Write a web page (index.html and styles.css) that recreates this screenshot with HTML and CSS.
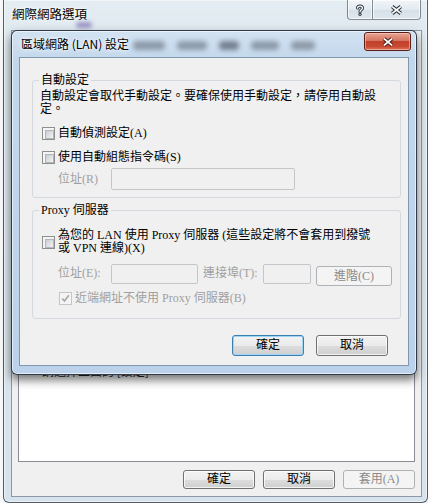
FILE: index.html
```html
<!DOCTYPE html>
<html>
<head>
    <meta charset="utf-8">
    <link rel="stylesheet" href="styles.css">
</head>
<body>
    <div class="window">
        <div class="titlebar">
            <span class="blur-spot"></span>
            <span class="win-title">網際網路選項</span>
            <div class="caption">
                <button class="cap-btn cap-help">
                    <svg width="10" height="12" viewBox="0 0 10 12">
                        <path d="M2.6 4 C2.6 1.4 7.4 1.4 7.4 4 C7.4 5.9 5 5.8 5 7.8" fill="none" stroke="#2f3a44" stroke-width="3.2" stroke-linecap="round"/>
                        <circle cx="5" cy="10.3" r="1.6" fill="#2f3a44"/>
                        <path d="M2.6 4 C2.6 1.4 7.4 1.4 7.4 4 C7.4 5.9 5 5.8 5 7.8" fill="none" stroke="#fff" stroke-width="1.3" stroke-linecap="round"/>
                        <circle cx="5" cy="10.3" r="0.6" fill="#fff"/>
                    </svg>
                </button>
                <button class="cap-btn cap-close">
                    <svg width="13" height="10" viewBox="0 0 13 10">
                        <path d="M2.2 1.6 L10.8 8.4 M10.8 1.6 L2.2 8.4" stroke="#2f3a44" stroke-width="3.8"/>
                        <path d="M2.2 1.6 L10.8 8.4 M10.8 1.6 L2.2 8.4" stroke="#fff" stroke-width="1.8"/>
                    </svg>
                </button>
            </div>
        </div>
        <div class="client">
            <div class="tabpanel">
                <p class="behind-text">請選擇上面的 [設定]</p>
            </div>
            <div class="footer">
                <button class="btn small">確定</button>
                <button class="btn small">取消</button>
                <button class="btn small" disabled>套用(A)</button>
            </div>
        </div>
    </div>

    <div class="dialog">
        <div class="dlg-titlebar">
            <div class="tabs-behind">
                <span class="blob" style="width: 32px"></span>
                <span class="blob" style="width: 30px"></span>
                <span class="blob dark" style="width: 20px"></span>
                <span class="blob" style="width: 28px"></span>
                <span class="blob" style="width: 24px"></span>
            </div>
            <span class="dlg-title">區域網路 (LAN) 設定</span>
            <button class="dlg-close">
                <svg width="12" height="10" viewBox="0 0 12 10">
                    <path d="M2 1.6 L10 8.4 M10 1.6 L2 8.4" stroke="#4a1a14" stroke-width="3.8"/>
                    <path d="M2 1.6 L10 8.4 M10 1.6 L2 8.4" stroke="#fff" stroke-width="1.9"/>
                </svg>
            </button>
        </div>

        <div class="dlg-client">
            <fieldset class="group group-auto">
                <legend>自動設定</legend>
                <p class="note">自動設定會取代手動設定。要確保使用手動設定，請停用自動設<br>定。</p>
                <label class="check first"><span class="box"></span>自動偵測設定(A)</label>
                <label class="check"><span class="box"></span>使用自動組態指令碼(S)</label>
                <div class="field-row">
                    <span class="muted label-r">位址(R)</span>
                    <span class="input input-wide"></span>
                </div>
            </fieldset>

            <fieldset class="group group-proxy">
                <legend>Proxy 伺服器</legend>
                <label class="check two-line"><span class="box"></span><span>為您的 LAN 使用 Proxy 伺服器 (這些設定將不會套用到撥號<br>或 VPN 連線)(X)</span></label>
                <div class="field-row proxy-row">
                    <span class="muted label-e">位址(E):</span>
                    <span class="input input-addr"></span>
                    <span class="muted label-t">連接埠(T):</span>
                    <span class="input input-port"></span>
                    <button class="btn adv" disabled>進階(C)</button>
                </div>
                <label class="check sub muted">
                    <span class="box checked">
                        <svg width="9" height="9" viewBox="0 0 9 9">
                            <path d="M1.3 4.6 L3.5 7 L7.8 1.2" fill="none" stroke="#a6a6a6" stroke-width="1.6"/>
                        </svg>
                    </span>近端網址不使用 Proxy 伺服器(B)
                </label>
            </fieldset>

            <div class="dlg-footer">
                <button class="btn default">確定</button>
                <button class="btn">取消</button>
            </div>
        </div>
    </div>
</body>
</html>
```

FILE: styles.css
```css
* {
    box-sizing: border-box;
}

body {
    margin: 0;
    width: 428px;
    height: 503px;
    overflow: hidden;
    position: relative;
    background: linear-gradient(to right, #f6f7f8, #e8edf0);
    font-family: "Liberation Serif", "Noto Sans CJK TC", serif;
    font-size: 12px;
    color: #000;
}

p {
    margin: 0;
}

button {
    font: inherit;
    color: inherit;
    padding: 0;
}

/* ---------- outer window ---------- */

.window {
    margin-left: 3px;
    width: 425px;
    height: 503px;
    border: 1px solid rgba(35, 45, 55, 0.75);
    border-top: none;
    border-radius: 0 0 6px 6px;
    background: linear-gradient(to bottom, #e4edf2 0, #dbe6ee 60px, #d6e2ec 100%);
    box-shadow: inset 0 0 0 1px rgba(255, 255, 255, 0.55);
    display: flex;
    flex-direction: column;
}

.titlebar {
    height: 30px;
    display: flex;
    align-items: flex-start;
    padding-left: 8px;
    position: relative;
}

.blur-spot {
    position: absolute;
    left: 72px;
    top: 22px;
    width: 16px;
    height: 6px;
    border-radius: 3px;
    background: #7b6fb2;
    filter: blur(2px);
    opacity: 0.7;
}

.win-title {
    font-family: "Noto Sans CJK TC", sans-serif;
    font-size: 12.5px;
    line-height: 14px;
    margin-top: 7px;
    text-shadow: 0 0 6px #fff, 0 0 3px #fff;
}

.caption {
    margin-left: auto;
    margin-right: 6px;
    display: flex;
}

.cap-btn {
    height: 20px;
    border: 1px solid rgba(60, 72, 84, 0.6);
    border-top: none;
    background: linear-gradient(to bottom, #f1f5f8, #e2eaf0 50%, #d6e0e8 51%, #dfe8ee);
    box-shadow: inset 0 0 0 1px rgba(255, 255, 255, 0.7);
    display: flex;
    align-items: center;
    justify-content: center;
}

.cap-help {
    width: 25px;
    border-radius: 0 0 0 4px;
    border-right: none;
}

.cap-close {
    width: 49px;
    border-radius: 0 0 4px 0;
}

.client {
    flex: 1;
    margin: 0 5px 5px 7px;
    border: 1px solid #8c9aa8;
    background: #f0f0f0;
    display: flex;
    flex-direction: column;
    padding: 0 6px 0 6px;
}

.tabpanel {
    flex: 1;
    border: 1px solid #898c95;
    background: #fff;
    display: flex;
    flex-direction: column;
    justify-content: flex-end;
    padding: 0 0 84px 23px;
}

.behind-text {
    font-family: "Noto Sans CJK TC", sans-serif;
    line-height: 13px;
    color: #222;
}

.footer {
    display: flex;
    justify-content: flex-end;
    gap: 8px;
    padding: 8px 0 7px;
}

/* ---------- buttons ---------- */

.btn {
    width: 72px;
    height: 21px;
    border: 1px solid #707070;
    border-radius: 3px;
    background: linear-gradient(to bottom, #f2f2f2 0%, #ebebeb 50%, #dddddd 51%, #cfcfcf 100%);
    box-shadow: inset 0 0 0 1px rgba(255, 255, 255, 0.75);
    line-height: 17px;
    text-align: center;
}

.btn.small {
    height: 19px;
    line-height: 15px;
}

.btn.default {
    border-color: #3c7fb1;
    box-shadow: inset 0 0 0 1px #9fd5f4;
}

.btn:disabled {
    border-color: #adb2b5;
    background: #f4f4f4;
    box-shadow: none;
    color: #8a8a8a;
}

/* ---------- LAN dialog ---------- */

.dialog {
    position: absolute;
    left: 11px;
    top: 30px;
    width: 406px;
    height: 345px;
    border: 1px solid rgba(20, 30, 45, 0.85);
    border-radius: 6px;
    background: linear-gradient(to bottom, #d2e2f1 0, #c3d7ec 30px, #bcd2ea 100%);
    box-shadow: inset 0 0 0 1px rgba(255, 255, 255, 0.6), 0 5px 10px rgba(0, 0, 0, 0.55);
    display: flex;
    flex-direction: column;
}

.dlg-titlebar {
    height: 26px;
    display: flex;
    align-items: flex-start;
    padding-left: 9px;
    position: relative;
}

.tabs-behind {
    position: absolute;
    left: 121px;
    top: 10px;
    display: flex;
    gap: 12px;
    opacity: 0.55;
}

.blob {
    height: 9px;
    border-radius: 4px;
    background: #5a6470;
    filter: blur(2.5px);
}

.blob.dark {
    background: #2e3440;
}

.dlg-title {
    position: relative;
    font-family: "Noto Sans CJK TC", sans-serif;
    font-size: 12px;
    line-height: 14px;
    margin-top: 6px;
    text-shadow: 0 0 6px #fff, 0 0 3px #fff;
}

.dlg-close {
    position: relative;
    margin-left: auto;
    margin-right: 5px;
    margin-top: 1px;
    width: 47px;
    height: 19px;
    border: 1px solid #5a1e16;
    border-radius: 3px;
    background: linear-gradient(to bottom, #e8a493 0%, #d47561 45%, #c2402a 50%, #c84a32 80%, #e07a5e 100%);
    box-shadow: inset 0 0 0 1px rgba(255, 220, 210, 0.5);
    display: flex;
    align-items: center;
    justify-content: center;
}

.dlg-client {
    flex: 1;
    margin: 0 7px 8px;
    border: 1px solid #7f97b0;
    background: #f0f0f0;
    display: flex;
    flex-direction: column;
}

.group {
    margin: 16px 7px 0 12px;
    padding: 0 8px 0 9px;
    border: 1px solid #d3d9de;
    border-radius: 3px;
}

.group legend {
    padding: 0 2px;
    margin-left: -3px;
    line-height: 13px;
}

.group-auto {
    padding-bottom: 7px;
}

.group-proxy {
    margin-top: 6px;
    padding-bottom: 13px;
}

.note {
    margin-top: 3px;
    line-height: 13px;
    margin-left: -2px;
}

.check {
    display: flex;
    align-items: center;
    gap: 3px;
    line-height: 13px;
    margin-top: 11px;
}

.check.two-line {
    margin-top: 12px;
}

.check.sub {
    margin-top: 6px;
    margin-left: 17px;
}

.box {
    flex: none;
    width: 13px;
    height: 13px;
    border: 1px solid #8e8f8f;
    background: #f4f4f4;
    position: relative;
}

.box::after {
    content: "";
    position: absolute;
    left: 2px;
    top: 2px;
    width: 7px;
    height: 7px;
    border: 1px solid #b2b5ba;
    background: linear-gradient(135deg, #c9ccd1, #f3f3f3);
}

.box.checked {
    border-color: #c5c5c5;
    display: flex;
    align-items: center;
    justify-content: center;
}

.box.checked::after {
    display: none;
}

.muted {
    color: #a0a0a0;
}

.field-row {
    display: flex;
    align-items: center;
    margin-top: 4px;
    line-height: 13px;
}

.label-r {
    margin-left: 16px;
    width: 53px;
}

.input {
    display: block;
    height: 22px;
    border: 1px solid #c4c6c9;
    border-radius: 2px;
    background: #f0f0f0;
}

.input-wide {
    width: 184px;
}

.proxy-row {
    margin-top: 9px;
    align-items: flex-start;
}

.proxy-row .muted {
    margin-top: 3px;
}

.proxy-row .input {
    height: 20px;
}

.label-e {
    margin-left: 16px;
    width: 53px;
}

.input-addr {
    width: 87px;
}

.label-t {
    margin-left: 5px;
    width: 60px;
}

.input-port {
    width: 48px;
}

.btn.adv {
    margin-left: 5px;
    margin-top: 2px;
    width: 76px;
    height: 20px;
    line-height: 16px;
}

.dlg-footer {
    display: flex;
    justify-content: flex-end;
    gap: 12px;
    margin-top: 16px;
    padding-right: 20px;
}
```
